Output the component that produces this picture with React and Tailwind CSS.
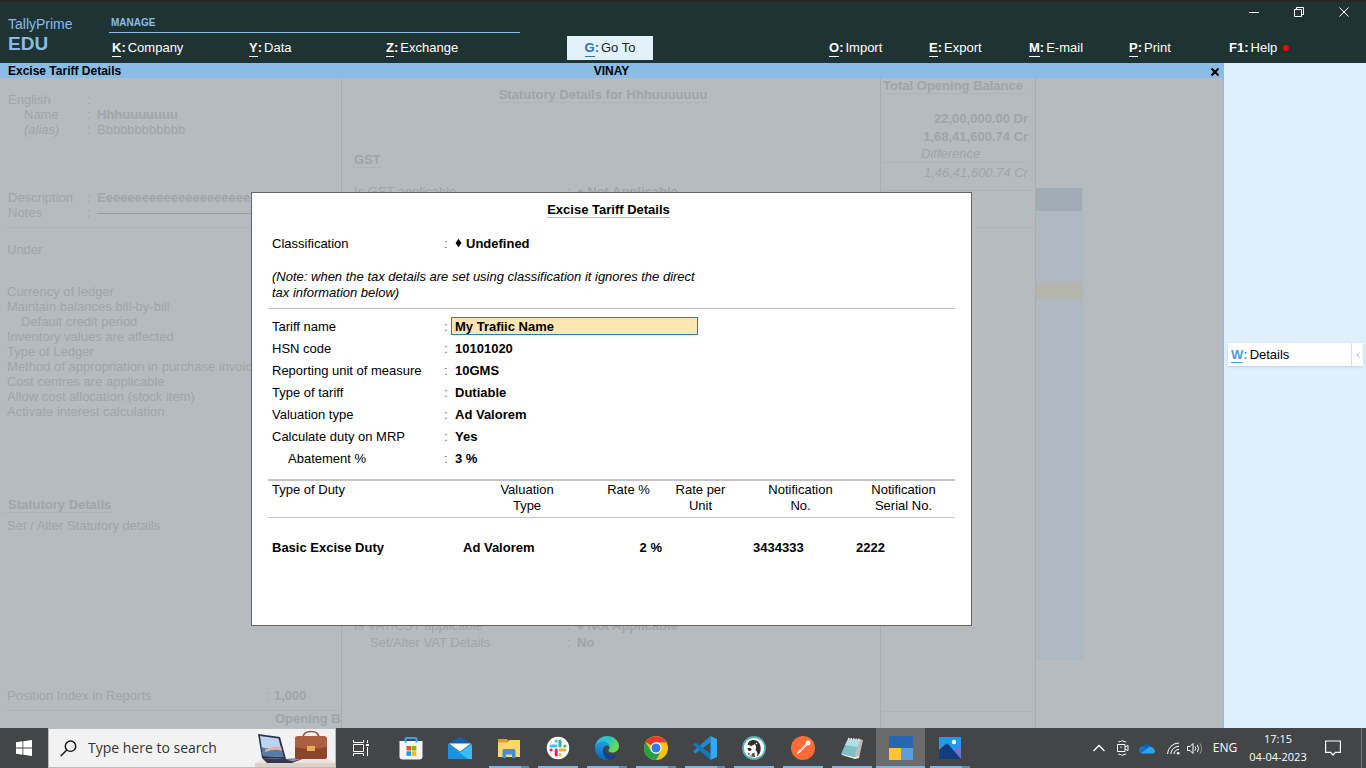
import React from "react";

const leftMenu = [
  ["K", "Company"],
  ["Y", "Data"],
  ["Z", "Exchange"],
];

const rightMenu = [
  ["O", "Import"],
  ["E", "Export"],
  ["M", "E-mail"],
  ["P", "Print"],
];

const ledgerOptions = [
  "Currency of ledger",
  "Maintain balances bill-by-bill",
  "Default credit period",
  "Inventory values are affected",
  "Type of Ledger",
  "Method of appropriation in purchase invoice",
  "Cost centres are applicable",
  "Allow cost allocation (stock item)",
  "Activate interest calculation",
];

const tariffRows = [
  ["HSN code", "10101020"],
  ["Reporting unit of measure", "10GMS"],
  ["Type of tariff", "Dutiable"],
  ["Valuation type", "Ad Valorem"],
  ["Calculate duty on MRP", "Yes"],
  ["Abatement %", "3 %"],
];

function MenuButton({ hotkey, label }) {
  return (
    <button type="button" className="flex h-6 items-center whitespace-nowrap text-[13px] text-white">
      <b className={hotkey === "F1" ? "border-b border-transparent leading-4" : "border-b border-white leading-4"}>{hotkey}</b>
      <b className="mr-0.5 border-b border-transparent leading-4">:</b>
      <span className="border-b border-transparent leading-4">{label}</span>
      {hotkey === "F1" && <span className="ml-1.5 size-1.5 rounded-full bg-[#ff0000]" />}
    </button>
  );
}

function Header() {
  return (
    <header className="flex h-[63px] shrink-0 border-t-2 border-[#2a2527] bg-[#1f3333] text-white">
      <div className="w-[109px] shrink-0 pt-3.5 pl-2 text-[#8abce6]">
        <div className="text-sm leading-4">TallyPrime</div>
        <div className="pt-0.5 text-[19px] leading-5 font-bold">EDU</div>
      </div>
      <nav className="w-[411px] shrink-0 pt-3.5">
        <div className="h-[17px] border-b border-[#8abce6] pt-px pl-0.5 text-[10px] leading-3 font-bold text-[#8abce6]">MANAGE</div>
        <div className="grid grid-cols-3 pt-[3px] *:pl-[3px]">
          {leftMenu.map(([k, l]) => (
            <MenuButton key={k} hotkey={k} label={l} />
          ))}
        </div>
      </nav>
      <button type="button" className="mt-[34px] ml-[47px] flex h-6 w-[86px] shrink-0 items-center justify-center bg-[#e2f1fb] text-[13px] text-[#222]">
        <b className="border-b border-[#2f70b8] leading-4 text-[#2f70b8]">G</b>
        <b className="mr-0.5 border-b border-transparent leading-4 text-[#2f70b8]">:</b>
        <span className="border-b border-transparent leading-4">Go To</span>
      </button>
      <div className="ml-auto flex w-[537px] flex-col">
        <div className="flex h-5 justify-end">
          <button type="button" aria-label="Minimize" className="flex w-[45px] items-center justify-center">
            <svg width="10" height="10" viewBox="0 0 10 10"><path d="M0 5.500h10" stroke="#fff" /></svg>
          </button>
          <button type="button" aria-label="Restore" className="flex w-[45px] items-center justify-center">
            <svg width="10" height="10" viewBox="0 0 10 10" fill="none" stroke="#fff"><path d="M.5 2.500h7v7h-7zM2.500 2.500V.5h7v7h-2" /></svg>
          </button>
          <button type="button" aria-label="Close window" className="flex w-[45px] items-center justify-center">
            <svg width="10" height="10" viewBox="0 0 10 10"><path d="M.5.5l9 9M9.500.5l-9 9" stroke="#fff" /></svg>
          </button>
        </div>
        <nav className="mt-3.5 grid grid-cols-[100px_100px_100px_100px_1fr]">
          {rightMenu.map(([k, l]) => (
            <MenuButton key={k} hotkey={k} label={l} />
          ))}
          <MenuButton hotkey="F1" label="Help" />
        </nav>
      </div>
    </header>
  );
}

function BackRow({ label, value, className = "", valueClass = "" }) {
  return (
    <div className="flex">
      <span className={"w-[79px] shrink-0 " + className}>{label}</span>
      <span className="w-2.5 shrink-0">:</span>
      <span className={valueClass}>{value}</span>
    </div>
  );
}

function LedgerBackdrop() {
  return (
    <div aria-hidden="true" className="flex h-full overflow-hidden bg-[#b6bbbf] text-[13px] leading-[15px] whitespace-nowrap text-[#a0a5a9]">
      <section className="w-[342px] shrink-0 overflow-hidden border-r border-[#a7acb0] pt-3.5">
        <div className="pl-2">
          <BackRow label="English" value="" />
          <BackRow label="Name" value="Hhhuuuuuuu" className="pl-4" valueClass="font-bold" />
          <BackRow label="(alias)" value="Bbbbbbbbbbbb" className="pl-4 italic" />
        </div>
        <div className="mt-[53px] pl-2">
          <BackRow label="Description" value="Eeeeeeeeeeeeeeeeeeeeeeeeeeee" valueClass="font-bold" />
          <div className="flex">
            <span className="w-[79px] shrink-0">Notes</span>
            <span className="w-2.5 shrink-0">:</span>
            <span className="mb-1.5 flex-1 border-b border-[#969b9f]" />
          </div>
        </div>
        <div className="mt-[7px] ml-1 border-b border-[#afb4b8]" />
        <div className="mt-3.5 pl-[7px]">Under</div>
        <ul className="mt-[27px] pl-[7px]">
          {ledgerOptions.map((o) => (
            <li key={o} className={o === "Default credit period" ? "pl-3.5" : ""}>{o}</li>
          ))}
        </ul>
        <div className="mt-[78px] ml-1 w-[108px] border-b border-[#afb4b8] pl-1 font-bold">Statutory Details</div>
        <div className="mt-[5px] pl-[7px]">Set / Alter Statutory details</div>
        <div className="mt-[155px] flex pl-[7px]">
          <span className="w-[258px]">Position Index in Reports</span>
          <span className="w-[9px]">:</span>
          <b>1,000</b>
        </div>
        <div className="mt-[7px] ml-1 border-t border-[#afb4b8] pl-[271px] font-bold">Opening B</div>
      </section>

      <section className="w-[539px] shrink-0 overflow-hidden border-r border-[#a7acb0] pt-[9px] pl-3">
        <div className="pr-7">
          <h2 className="mx-auto h-4 w-fit border-b border-[#afb4b8] font-bold">Statutory Details for Hhhuuuuuuu</h2>
        </div>
        <h3 className="mt-[49px] h-4 w-fit border-b border-[#afb4b8] font-bold">GST</h3>
        <div className="mt-4 flex">
          <span className="w-[213px]">Is GST applicable</span>
          <span className="w-2.5">:</span>
          <b>♦ Not Applicable</b>
        </div>
        <div className="mt-[419px] flex">
          <span className="w-[213px]">Is VAT/CST applicable</span>
          <span className="w-2.5">:</span>
          <b>♦ Not Applicable</b>
        </div>
        <div className="mt-0.5 flex">
          <span className="w-[213px] pl-4">Set/Alter VAT Details</span>
          <span className="w-2.5">:</span>
          <b>No</b>
        </div>
      </section>

      <section className="flex w-[155px] shrink-0 flex-col overflow-hidden border-r border-[#a7acb0]">
        <div className="mr-[7px] flex h-4 justify-end border-b border-[#afb4b8] pr-[5px] font-bold">Total Opening Balance</div>
        <div className="mt-4 pr-[7px] text-right leading-[18px] font-bold">22,00,000.00 Dr</div>
        <div className="pr-[7px] text-right leading-[18px] font-bold">1,68,41,600.74 Cr</div>
        <div className="mr-[7px] border-b border-[#afb4b8] pl-10 leading-4 italic">Difference</div>
        <div className="mt-px pr-[7px] text-right leading-[18px] italic">1,46,41,600.74 Cr</div>
        <div className="mt-2 h-[38px] border-y border-[#afb4b8]" />
        <div className="mt-auto h-[17px] border-t border-[#afb4b8]" />
      </section>

      <section className="mt-[110px] h-[471px] w-[47px] border-r border-b border-[#a8b7c1] bg-[#b0b8c1]">
        <div className="h-[23px] bg-[#a1acb7]" />
        <div className="mt-[72px] h-4 bg-[#b4b6ab]" />
      </section>
    </div>
  );
}

function TariffDialog() {
  return (
    <section role="dialog" aria-labelledby="dialog-title" className="min-h-[434px] w-[721px] border border-[#666] bg-white px-4 pt-[9px] text-[13px] leading-4 text-black">
      <div className="pr-1.5">
        <h1 id="dialog-title" className="mx-auto h-4 w-fit border-b border-[#bbb] font-bold">Excise Tariff Details</h1>
      </div>
      <div className="mt-[15px] flex h-[22px] items-center pl-1">
        <span className="w-[172px]">Classification</span>
        <span className="w-[11px] text-[#567]">:</span>
        <svg width="7" height="10" viewBox="0 0 7 10" className="mr-1 mb-0.5"><path d="M3.500.8L6.500 5 3.500 9.200.5 5z" /></svg>
        <b>Undefined</b>
      </div>
      <p className="mt-3.5 w-[440px] pl-1 italic">
        (Note: when the tax details are set using classification it ignores the direct tax information below)
      </p>
      <hr className="mt-[7px] border-[#c4c4c4]" />
      <form className="mt-1.5 pl-1">
        <div className="flex h-[22px] items-center">
          <label htmlFor="tariff-name" className="w-[172px] pt-0.5">Tariff name</label>
          <span className="w-[7px] pt-0.5 text-[#567]">:</span>
          <input id="tariff-name" defaultValue="My Trafiic Name" className="h-[18px] w-[247px] border border-[#1b87b9] bg-[#fee6b0] px-[3px] font-bold outline-none" />
        </div>
        <dl className="grid grid-cols-[172px_1fr]">
          {tariffRows.map(([l, v]) => (
            <React.Fragment key={l}>
              <dt className={"flex h-[22px] items-center pt-0.5 " + (l === "Abatement %" ? "pl-4" : "")}>{l}</dt>
              <dd className="flex h-[22px] items-center pt-0.5 font-bold">
                <span className="w-[11px] font-normal text-[#567]">:</span>
                {v}
              </dd>
            </React.Fragment>
          ))}
        </dl>
      </form>
      <table className="mt-2.5 w-full table-fixed border-t-2 border-[#c4c4c4]">
        <colgroup>
          <col className="w-[191px]" />
          <col className="w-[136px]" />
          <col className="w-[67px]" />
          <col className="w-[87px]" />
          <col className="w-[103px]" />
          <col className="w-[103px]" />
        </colgroup>
        <thead>
          <tr className="h-[37px] border-b border-[#c4c4c4] align-top *:pt-px *:font-normal">
            <th className="pl-1 text-left">Type of Duty</th>
            <th>Valuation<br />Type</th>
            <th>Rate %</th>
            <th className="pr-2.5">Rate per<br />Unit</th>
            <th>Notification<br />No.</th>
            <th>Notification<br />Serial No.</th>
          </tr>
        </thead>
        <tbody>
          <tr className="h-[62px] font-bold">
            <td className="pl-1">Basic Excise Duty</td>
            <td className="pl-1">Ad Valorem</td>
            <td className="text-right">2 %</td>
            <td />
            <td className="pl-1">3434333</td>
            <td className="pl-1">2222</td>
          </tr>
        </tbody>
      </table>
    </section>
  );
}

/* ---------- taskbar icons ---------- */

const StoreIcon = () => (
  <svg width="24" height="24" viewBox="0 0 24 24">
    <path d="M.5 5h23v15.500q0 3-3 3h-17q-3 0-3-3z" fill="#f5f5f5" />
    <path d="M6.500 6.500V3Q6.500 2 7.500 2h9q1 0 1 1v3.500" fill="none" stroke="#29abe8" strokeWidth="2" />
    <path d="M7.500 10H12v4.500H7.500z" fill="#f25022" /><path d="M12.800 10h4.500v4.500h-4.500z" fill="#7fba00" />
    <path d="M7.500 15.300H12v4.500H7.500z" fill="#00a4ef" /><path d="M12.800 15.300h4.500v4.500h-4.500z" fill="#ffb900" />
  </svg>
);
const MailIcon = () => (
  <svg width="24" height="24" viewBox="0 0 24 24">
    <path d="M0 8L12 1l12 7v4H0z" fill="#0f62b4" />
    <path d="M0 8l12 8 12-8v15H0z" fill="#36bff2" /><path d="M0 8l20 15H0z" fill="#1993df" /><path d="M1 7.500h22L12 15.500z" fill="#fff" />
  </svg>
);
const FolderIcon = () => (
  <svg width="24" height="24" viewBox="0 0 24 24">
    <path d="M1 3h9l2 2h10v5H1z" fill="#dfa012" /><path d="M1 6.500h9.500L12.500 4H23v17H1z" fill="#ffd767" />
    <path d="M5.500 22v-7q0-2 2-2h9q2 0 2 2v7h-3.500v-3.500H9V22z" fill="#3c8fd8" />
  </svg>
);
const SlackIcon = () => (
  <svg width="24" height="24" viewBox="0 0 24 24" strokeWidth="3" strokeLinecap="round">
    <circle cx="12" cy="12" r="11.200" fill="#fff" />
    <path d="M10.200 5v.2M5 10h5.200" stroke="#36c5f0" /><path d="M14 5v5M19 10h-.2" stroke="#2eb67d" />
    <path d="M10.200 14v5M5 14h.2" stroke="#e01e5a" /><path d="M14 14h5M14 19v-.2" stroke="#ecb22e" />
  </svg>
);
const EdgeIcon = () => (
  <svg width="24" height="24" viewBox="0 0 24 24">
    <defs>
      <linearGradient id="edge-a" x1="0" y1="0" x2="1" y2=".5"><stop offset="0" stopColor="#28b7e8" /><stop offset=".55" stopColor="#30c6bd" /><stop offset="1" stopColor="#67df4e" /></linearGradient>
      <linearGradient id="edge-b" x1="0" y1="0" x2="0" y2="1"><stop offset="0" stopColor="#1e9de2" /><stop offset="1" stopColor="#1065b5" /></linearGradient>
    </defs>
    <path d="M0 11C1 4 6 0 12 0c7 0 12 5 12 10 0 4-3 6.500-6.500 6.500-3 0-4.500-1.200-4-2.200 1-1.300 1.200-2.300.8-3.500C13 7 4 5 0 11z" fill="url(#edge-a)" />
    <path d="M0 12c0-4 4-6.500 8-6.500 4 0 6.500 2 6.800 5C12 8 8 10 8 15c0 4 3 7.500 6 8.700C6 25 0 19 0 12z" fill="url(#edge-b)" />
    <path d="M9.500 11C7 14 8 22 14 23.700c4-.6 7-2.700 8.800-5.700-5.800 2.500-13.300.5-13.300-7z" fill="#12438d" />
  </svg>
);
const ChromeIcon = () => (
  <svg width="24" height="24" viewBox="0 0 24 24">
    <circle cx="12" cy="12" r="12" fill="#fbc116" />
    <path d="M12 12L1.600 6a12 12 0 0 1 20.800 0.500H12z" fill="#e33b2e" />
    <path d="M1.600 6l5.600 9.200L12 17.500h4L12 24A12 12 0 0 1 1.600 6z" fill="#26a047" />
    <circle cx="12" cy="12" r="5.700" fill="#fff" /><circle cx="12" cy="12" r="4.500" fill="#2f7cf0" />
  </svg>
);
const CodeIcon = () => (
  <svg width="24" height="24" viewBox="0 0 24 24">
    <path d="M17.500 0v6.500L2.500 17.500 0 15.500z" fill="#2089d0" />
    <path d="M17.500 24v-6.500L2.500 6.500 0 8.500z" fill="#1479bd" />
    <path d="M17.500 0L24 3v18l-6.500 3z" fill="#31a8f0" />
  </svg>
);
const BeaverIcon = () => (
  <svg width="24" height="24" viewBox="0 0 24 24">
    <circle cx="12" cy="12" r="11" fill="#fff" stroke="#57b3ba" strokeWidth="1.800" />
    <path d="M5.500 8.500C6.500 5 9 3.800 12 4c4 .2 6.500 3.500 6.700 8 .1 4-1.200 6.500-3.700 8.500.8-3 .3-5-1.500-6.300 1-2.200.8-4.400-.8-6.200-2 1.800-4.800 2.200-7.200.5z" fill="#372b27" />
    <path d="M5.300 12.500q1.700-1.500 4 0 .8 1.500-.8 2.500-2.200.5-3.200-2.500z" fill="#372b27" />
    <path d="M6 16.500q3 2 6.500 0l.5 4.500q-4 .5-6.500-2z" fill="#5d5048" />
    <path d="M7.500 16.800h2.200v2.700H7.500z" fill="#fff" />
    <circle cx="14.500" cy="7.500" r=".8" fill="#fff" /><circle cx="9" cy="9.800" r=".7" fill="#372b27" />
  </svg>
);
const PostmanIcon = () => (
  <svg width="24" height="24" viewBox="0 0 24 24">
    <circle cx="12" cy="12" r="12" fill="#ff6c37" />
    <path d="M5.500 18.500l2-3.500 7-7 1.500 1.500-7 7z" fill="#fff" /><circle cx="17" cy="7" r="2.400" fill="#fff" />
    <path d="M9 14.500l5.500-5" stroke="#ff6c37" strokeWidth=".6" />
  </svg>
);
const NotepadIcon = () => (
  <svg width="24" height="24" viewBox="0 0 24 24">
    <path d="M19 3l4 1-4 18-6-2z" fill="#bdbdb9" /><path d="M2 18l13 4 4-1" stroke="#e9e9e3" strokeWidth="2" fill="none" />
    <path d="M8 3l12 1-6 17L1 18z" fill="#80bfc8" /><path d="M8 3l12 1-2.500 7L5 9z" fill="#b3e0e3" />
    <path d="M8 2.500l12 1" stroke="#f3f3ef" strokeWidth="1.500" strokeDasharray="1.500 1" />
  </svg>
);
const TallyIcon = () => (
  <svg width="24" height="24" viewBox="0 0 24 24">
    <path d="M0 0h24v12H0z" fill="#2865b2" /><path d="M0 12h12v12H0z" fill="#ffc633" /><path d="M12 12h12v12H12z" fill="#5a9edb" />
  </svg>
);
const PhotosIcon = () => (
  <svg width="24" height="24" viewBox="0 0 24 24">
    <path d="M1 1h22v22H1z" fill="#1e9bed" /><path d="M13 16L20 10l3 3v10z" fill="#7174d6" />
    <path d="M1 14l7-6q1-.8 2 0l13 15H1z" fill="#123b80" /><circle cx="16" cy="6" r="2.200" fill="#fff" />
  </svg>
);
const TaskViewIcon = () => (
  <svg width="16" height="16" viewBox="0 0 16 16" fill="none" stroke="#fff">
    <path d="M.5 0v2.500h10V0M.5 16v-2.500h10V16M.5 4.500h10v7H.5zM14.500 0v3M14.500 7v9" /><path d="M13 4h3v2h-3z" fill="#fff" stroke="none" />
  </svg>
);

const apps = [
  ["Microsoft Store", StoreIcon, "none"],
  ["Mail", MailIcon, "none"],
  ["File Explorer", FolderIcon, "stack"],
  ["Slack", SlackIcon, "one"],
  ["Edge", EdgeIcon, "stack"],
  ["Chrome", ChromeIcon, "stack"],
  ["Visual Studio Code", CodeIcon, "stack"],
  ["DBeaver", BeaverIcon, "one"],
  ["Postman", PostmanIcon, "one"],
  ["Notepad", NotepadIcon, "one"],
  ["TallyPrime", TallyIcon, "active"],
  ["Photos", PhotosIcon, "stack"],
];

function AppButton({ name, Icon, state }) {
  return (
    <button type="button" aria-label={name} className={"flex h-10 w-[49px] shrink-0 flex-col items-center pt-2 " + (state === "active" ? "bg-[#6b6b6b]" : "")}>
      <Icon />
      {state === "one" && <span className="mt-1.5 h-0.5 w-10 bg-[#76b9ed]" />}
      {state === "active" && <span className="mt-1.5 h-0.5 w-full bg-[#76b9ed]" />}
      {state === "stack" && (
        <span className="mt-1.5 flex h-0.5 w-10">
          <span className="flex-1 bg-[#76b9ed]" />
          <span className="w-2 bg-[#5b8bb0]" />
        </span>
      )}
    </button>
  );
}

function SearchArt() {
  return (
    <svg width="80" height="38" viewBox="0 0 80 38" className="shrink-0">
      <path d="M0 34h80v4H0z" fill="#ddd0c7" /><path d="M0 34l6-4h68l6 4z" fill="#efe5de" />
      <path d="M3 5l22 3 6 22-24-1z" fill="#2b3148" /><path d="M5 7l18.500 2.500L28.500 28 8 27z" fill="#b9d5f0" />
      <path d="M6.500 18q7 3 19.500 0l2.500 10L8 27z" fill="#587aa6" /><path d="M10 21q8-5 16-3l1 4q-6-3-17 1z" fill="#e8b48f" />
      <path d="M7 29l23 1 20-1-13 5H12z" fill="#363a50" /><path d="M31 30.500l17-1-10 3z" fill="#8d91a5" />
      <path d="M48 9q0-6.500 8-6.500T64 9" fill="none" stroke="#9a5a3c" strokeWidth="1.600" />
      <path d="M43 8h26q3 0 3 3v17q0 2-3 2H43q-3 0-3-2V11q0-3 3-3z" fill="#8a452c" />
      <path d="M40 10q0-3 3-3h26q3 0 3 3v8q-16 4-32 0z" fill="#ad5e40" />
      <path d="M52 17h8v5h-8z" fill="#e7ad55" />
    </svg>
  );
}

function Taskbar() {
  return (
    <footer className="flex h-10 shrink-0 bg-[#434546] font-['Open_Sans',sans-serif] text-white">
      <button type="button" aria-label="Start" className="flex w-12 shrink-0 items-center justify-center">
        <svg width="16" height="16" viewBox="0 0 16 16" fill="#fff"><path d="M0 2.200l6.500-.9v6.200H0zM7.300 1.200L16 0v7.500H7.300zM0 8.400h6.500v6.300L0 13.800zM7.300 8.400H16V16l-8.700-1.200z" /></svg>
      </button>
      <div className="flex w-72 shrink-0 items-center border border-[#bbb] bg-[#f2f2f2] pl-[11px]">
        <svg width="17" height="17" viewBox="0 0 17 17" fill="none" stroke="#111" strokeWidth="1.400"><circle cx="10.500" cy="6.200" r="5.200" /><path d="M6.800 10L.8 16" /></svg>
        <input aria-label="Search" placeholder="Type here to search" className="ml-[11px] w-0 flex-1 bg-transparent text-sm outline-none placeholder:text-[#333]" />
        <SearchArt />
      </div>
      <button type="button" aria-label="Task view" className="flex w-[50px] shrink-0 items-center justify-center">
        <TaskViewIcon />
      </button>
      {apps.map(([name, Icon, state]) => (
        <AppButton key={name} name={name} Icon={Icon} state={state} />
      ))}
      <div className="ml-auto flex items-center">
        <button type="button" aria-label="Hidden icons" className="flex w-6 justify-center">
          <svg width="12" height="8" viewBox="0 0 12 8" fill="none" stroke="#fff" strokeWidth="1.300"><path d="M.5 7L6 1.500 11.500 7" /></svg>
        </button>
        <button type="button" aria-label="Meet now" className="flex w-6 justify-center">
          <svg width="12" height="16" viewBox="0 0 12 16" fill="none" stroke="#fff"><path d="M.5 4.500h7.500v7H.5zM8 7l3-1.500v5L8 9M1.500 2Q5.500-.3 9 2M1.500 14q4 2.300 7.500 0M4 6.500v1.500" /></svg>
        </button>
        <button type="button" aria-label="OneDrive" className="flex w-6 justify-center">
          <svg width="16" height="11" viewBox="0 0 16 11"><path d="M3 5a5 5 0 0 1 9-1.500Q9 6 3 9z" fill="#0a64b8" /><circle cx="3.500" cy="7" r="3.500" fill="#1177cc" /><path d="M2 10.500L10 4q4-1 6 4 0 2.500-2.500 2.500z" fill="#29a5ed" /></svg>
        </button>
        <button type="button" aria-label="Network" className="flex w-7 justify-center">
          <svg width="13" height="13" viewBox="0 0 13 13" fill="none" stroke="#fff"><path d="M.5 12A11.500 11.500 0 0 1 12 1M3.800 12A8.200 8.200 0 0 1 12 4.300M7 12a5 5 0 0 1 5-4.500M10 11.500h2" /><circle cx="11.200" cy="11.200" r="1.300" fill="#fff" stroke="none" /></svg>
        </button>
        <button type="button" aria-label="Volume" className="flex w-4 justify-center">
          <svg width="16" height="13" viewBox="0 0 16 13" fill="none" stroke="#fff"><path d="M.5 4.500H3L6 1.500v10l-3-3H.5zM8 4.500q1.500 2 0 4M10.300 2.800q2.600 3.700 0 7.400" /><path d="M12.800 1.200q3.600 5.300 0 10.600" stroke="#999" /></svg>
        </button>
        <button type="button" className="w-11 text-center text-xs">ENG</button>
        <button type="button" className="w-[62px] text-center text-[11px] leading-[18px]">17:15<br />04-04-2023</button>
        <button type="button" aria-label="Notifications" className="flex w-[52px] justify-center pr-1">
          <svg width="16" height="16" viewBox="0 0 16 16" fill="none" stroke="#fff" strokeWidth="1.200"><path d="M.6 1h14.800v11.400h-5L8 15l-2.400-2.600h-5z" /></svg>
        </button>
        <span className="h-10 w-[5px] border-l border-[#777]" />
      </div>
    </footer>
  );
}

export default function App() {
  return (
    <div className="flex h-screen flex-col overflow-hidden font-['Liberation_Sans',Arial,sans-serif]">
      <Header />
      <div className="flex min-h-0 flex-1">
        <main className="flex min-w-0 flex-1 flex-col">
          <div className="grid h-[15px] shrink-0 grid-cols-[1fr_auto_1fr] items-center bg-[#8abce6] px-1 pt-px text-xs leading-[15px] font-bold text-black">
            <span className="pl-1">Excise Tariff Details</span>
            <span>VINAY</span>
            <button type="button" aria-label="Close" className="justify-self-end">
              <svg width="8" height="8" viewBox="0 0 8 8"><path d="M.5.5l7 7M7.500.5l-7 7" stroke="#000" strokeWidth="2" /></svg>
            </button>
          </div>
          <div className="relative min-h-0 flex-1">
            <LedgerBackdrop />
            <div className="absolute inset-0 flex items-center justify-center pt-3">
              <TariffDialog />
            </div>
          </div>
        </main>
        <aside className="w-[143px] shrink-0 border-l border-[#8abce6] bg-[#def0fc] pr-[3px] pl-1">
          <button type="button" className="mt-[280px] flex h-[23px] w-full items-center bg-white pl-[3px] text-[13px] text-black shadow">
            <b className="border-b border-[#4a9fd8] leading-[15px] text-[#4a9fd8]">W</b>
            <b className="mr-0.5 border-b border-transparent leading-[15px] text-[#4a9fd8]">:</b>
            <span className="flex-1 border-b border-transparent text-left leading-[15px]">Details</span>
            <span className="flex h-full w-3 items-center justify-center border-l border-[#ddd]">
              <svg width="4" height="6" viewBox="0 0 4 6" fill="none" stroke="#bbb"><path d="M3.500.5L1 3l2.500 2.500" /></svg>
            </span>
          </button>
        </aside>
      </div>
      <Taskbar />
    </div>
  );
}
